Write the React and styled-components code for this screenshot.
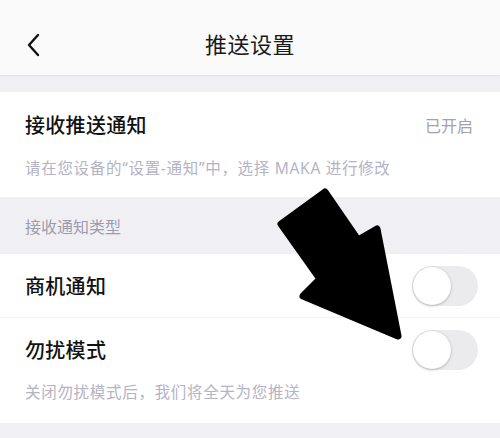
import React from 'react';
import styled, { createGlobalStyle } from 'styled-components';

const GlobalStyle = createGlobalStyle`
  html, body {
    margin: 0;
    padding: 0;
    background: #f0f0f4;
    font-family: "Noto Sans CJK SC", "Noto Sans", sans-serif;
  }
`;

const Page = styled.div`
  position: relative;
  width: 500px;
  height: 438px;
  overflow: hidden;
  background: #f0f0f4;
`;

const Header = styled.header`
  height: 75px;
  background: #fafafa;
  display: flex;
  align-items: center;
  justify-content: center;
  position: relative;
  box-shadow: 0 1px 2px rgba(0, 0, 0, 0.06);
  margin-bottom: 17px;
`;

const BackButton = styled.button`
  position: absolute;
  left: 22px;
  top: 30px;
  width: 24px;
  height: 30px;
  border: 0;
  padding: 0;
  background: transparent;
  display: flex;
  align-items: center;
  justify-content: center;
`;

const Title = styled.h1`
  margin: 10px 0 0;
  font-size: 22px;
  font-weight: 400;
  color: #1a1a1a;
  letter-spacing: 0.5px;
`;

const Card = styled.section`
  background: #ffffff;
`;

const Row = styled.div`
  display: flex;
  align-items: center;
  justify-content: space-between;
  padding: 0 22px 0 25px;
  height: ${p => p.$h}px;
  border-top: ${p => (p.$divider ? '1px solid #f2f2f4' : 'none')};
`;

const Label = styled.span`
  font-size: 20px;
  font-weight: 500;
  color: #111;
  letter-spacing: 0.3px;
`;

const Status = styled.span`
  font-size: 16px;
  color: #a1a1b3;
  margin-right: 5px;
`;

const Hint = styled.p`
  margin: 0;
  padding: ${p => p.$pad};
  font-family: "Noto Sans", "Noto Sans CJK SC", sans-serif;
  font-size: 15.5px;
  line-height: 22px;
  color: #b3b3c4;
  letter-spacing: 0.7px;
`;

const GroupTitle = styled.div`
  height: 57px;
  display: flex;
  align-items: center;
  padding: 0 25px;
  font-size: 16px;
  color: #9c9cab;
`;

const Track = styled.div`
  width: 66px;
  height: 40px;
  border-radius: 20px;
  background: #ebebee;
  position: relative;
`;

const Knob = styled.div`
  position: absolute;
  top: 1px;
  left: 1px;
  width: 38px;
  height: 38px;
  border-radius: 50%;
  background: #fff;
  box-shadow: 0 1px 3px rgba(0, 0, 0, 0.22), 0 0 0 0.5px rgba(0, 0, 0, 0.06);
`;

const Arrow = styled.svg`
  position: absolute;
  left: 0;
  top: 0;
  pointer-events: none;
`;

const Toggle = () => (
  <Track>
    <Knob />
  </Track>
);

export default function App() {
  return (
    <Page>
      <GlobalStyle />
      <Header>
        <BackButton aria-label="返回">
          <svg width="16" height="24" viewBox="0 0 16 24">
            <path d="M12 2 L3 12 L12 22" fill="none" stroke="#111" strokeWidth="2.4" strokeLinecap="round" strokeLinejoin="round" />
          </svg>
        </BackButton>
        <Title>推送设置</Title>
      </Header>

      <Card>
        <Row $h={65}>
          <Label>接收推送通知</Label>
          <Status>已开启</Status>
        </Row>
        <Hint $pad="0 25px 18px">请在您设备的“设置-通知”中，选择 MAKA 进行修改</Hint>
      </Card>

      <GroupTitle>接收通知类型</GroupTitle>

      <Card>
        <Row $h={63}>
          <Label>商机通知</Label>
          <Toggle />
        </Row>
        <Row $h={63} $divider>
          <Label>勿扰模式</Label>
          <Toggle />
        </Row>
        <Hint $pad="0 25px 20px">关闭勿扰模式后，我们将全天为您推送</Hint>
      </Card>

      <Arrow width="500" height="438" viewBox="0 0 500 438">
        <path
          d="M325 192 L358 240 L377 229 L398 336 L303 296 L320 279 L281 224 Z"
          fill="#000"
          stroke="#000"
          strokeWidth="7"
          strokeLinejoin="round"
        />
      </Arrow>
    </Page>
  );
}
